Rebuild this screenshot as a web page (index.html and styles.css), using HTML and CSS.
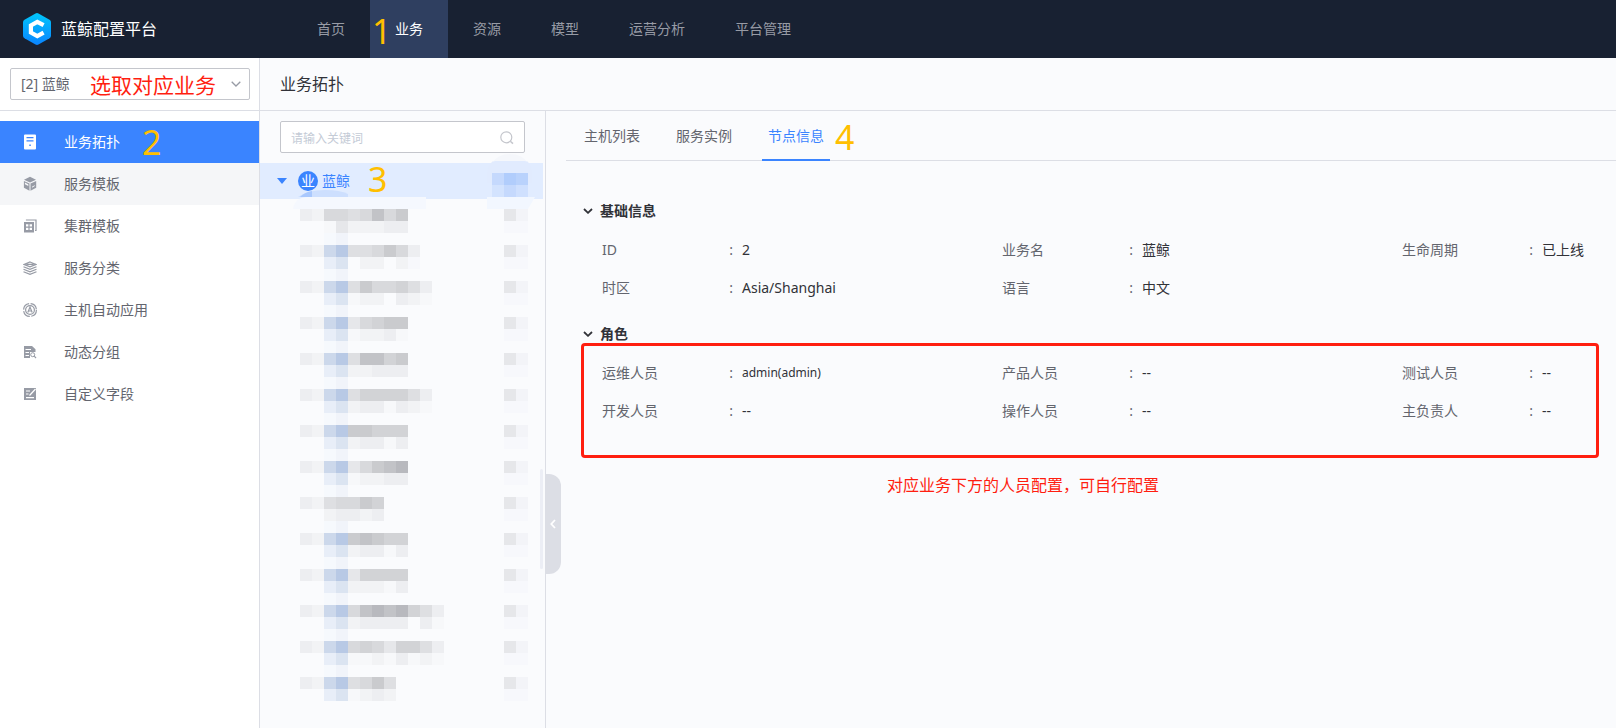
FILE: index.html
```html
<!DOCTYPE html>
<html lang="zh-CN">
<head>
<meta charset="utf-8">
<title>蓝鲸配置平台</title>
<link rel="stylesheet" href="styles.css">
</head>
<body>
<header class="topbar">
  <a class="brand" href="#">
    <svg class="brand-logo" viewBox="0 0 28 32" aria-hidden="true">
      <defs><linearGradient id="logo-fill" x1="0" y1="0" x2="0" y2="1"><stop offset="0" stop-color="#00c6fb"/><stop offset="1" stop-color="#0a84ff"/></linearGradient></defs>
      <path d="M12.500.500Q14-.300 15.500.500L26.500 6.700Q28 7.600 28 9.200V22.800Q28 24.400 26.500 25.300L15.500 31.500Q14 32.300 12.500 31.500L1.500 25.300Q0 24.400 0 22.800V9.200Q0 7.600 1.500 6.700Z" fill="url(#logo-fill)"/>
      <path d="M20.600 12.200L14.300 8.900L7.900 12.500V19.500L14.300 23.100L20.600 19.600" fill="none" stroke="#fff" stroke-width="4.200"/>
    </svg>
    <span>蓝鲸配置平台</span>
  </a>
  <nav class="nav">
    <a class="nav-item" href="#">首页</a>
    <a class="nav-item is-active" href="#">业务<span class="mark mark-one">1</span></a>
    <a class="nav-item" href="#">资源</a>
    <a class="nav-item" href="#">模型</a>
    <a class="nav-item" href="#">运营分析</a>
    <a class="nav-item" href="#">平台管理</a>
  </nav>
</header>
<div class="shell">
  <aside class="sidebar">
    <div class="biz">
      <select class="biz-select" aria-label="业务"><option>[2] 蓝鲸</option></select>
      <svg class="biz-arrow" viewBox="0 0 10 6" aria-hidden="true"><path d="M.7.7L5 5L9.300.700" fill="none" stroke="#979ba5" stroke-width="1.300"/></svg>
      <span class="mark mark-biz">选取对应业务</span>
    </div>
    <nav class="menu">
      <a class="menu-item is-active" href="#">
        <svg class="menu-icon" viewBox="0 0 14 16"><path fill-rule="evenodd" d="M2 .500H12Q13 .500 13 1.500V14.500Q13 15.500 12 15.500H2Q1 15.500 1 14.500V1.500Q1 .500 2 .500ZM3.500 3V4.200H10.500V3ZM3.500 6.200V7.400H10.500V6.200ZM6.300 10.500V12H7.800V10.500Z" fill="#fff"/></svg>
        业务拓扑<span class="mark mark-two">2</span></a>
      <a class="menu-item is-hover" href="#">
        <svg class="menu-icon" viewBox="0 0 14 16"><path d="M7 .800L13 3.800L7 6.600L1 3.800Z" fill="#979ba5"/><path d="M7.500 7.600L13.200 4.900V11.700L7.500 14.800Z" fill="#979ba5"/><path d="M.900 4.900L6.500 7.600V14.800L.900 11.700ZM1.900 6.600V8.300L5.300 10V8.200Z" fill="#979ba5" fill-rule="evenodd"/><path d="M9 11.200L11.700 9.700" stroke="#f5f6f8"/></svg>
        服务模板</a>
      <a class="menu-item" href="#">
        <svg class="menu-icon" viewBox="0 0 14 16"><path d="M3.500 2.500V2H13V12.500H12" fill="none" stroke="#979ba5" stroke-width="1.200"/><path fill-rule="evenodd" d="M1 4H11V14.500H1ZM3 6.300V8.500H5.400V6.300ZM6.600 6.300V8.500H9V6.300ZM3 9.700V12H5.400V9.700ZM6.600 9.700V12H9V9.700Z" fill="#979ba5"/></svg>
        集群模板</a>
      <a class="menu-item" href="#">
        <svg class="menu-icon" viewBox="0 0 14 16"><g fill="none" stroke="#979ba5" stroke-width="1.200"><path d="M7 2L13 4.400L7 6.800L1 4.400ZM3.500 4.400H10.500"/><path d="M.500 6.800L7 9.300L13.500 6.800M.500 9.300L7 11.800L13.500 9.300M.500 11.800L7 14.300L13.500 11.800"/></g></svg>
        服务分类</a>
      <a class="menu-item" href="#">
        <svg class="menu-icon" viewBox="0 0 14 16"><g fill="none" stroke="#979ba5" stroke-width="1.200"><circle cx="7" cy="8" r="6.400" stroke-dasharray="8.500 1.500"/><circle cx="7" cy="8" r="4.400"/><path d="M4.800 10.500L7 5L9.200 10.500M5.500 9H8.500"/></g></svg>
        主机自动应用</a>
      <a class="menu-item" href="#">
        <svg class="menu-icon" viewBox="0 0 14 16"><path fill-rule="evenodd" d="M1 2H9L12.500 5.200V8H7V14H1ZM2.500 5V6H8V5ZM2.500 8V9H6V8ZM2.500 11V12H6V11Z" fill="#979ba5"/><circle cx="9.700" cy="10.700" r="2" fill="none" stroke="#979ba5"/><path d="M11.200 12.200L13 14" stroke="#979ba5" stroke-width="1.200"/></svg>
        动态分组</a>
      <a class="menu-item" href="#">
        <svg class="menu-icon" viewBox="0 0 14 16"><path d="M1 2H13V14H1Z" fill="#979ba5"/><path d="M3 5H7M3 8H5.500M3 11.700H11M6.500 9.500L12.500 3" stroke="#fff" stroke-width="1.200"/></svg>
        自定义字段</a>
    </nav>
  </aside>
  <main class="page">
    <h1 class="page-title">业务拓扑</h1>
    <div class="columns">
      <section class="tree">
        <div class="search">
          <input class="search-input" type="text" placeholder="请输入关键词" aria-label="请输入关键词">
          <svg class="search-icon" viewBox="0 0 14 14" aria-hidden="true"><circle cx="6.300" cy="6.300" r="5.500" fill="none" stroke="#c4c6cc" stroke-width="1.200"/><path d="M10.300 10.300L13 12.600" stroke="#c4c6cc" stroke-width="1.500"/></svg>
        </div>
        <div class="node">
          <span class="node-caret"></span>
          <span class="node-badge">业</span>
          <span class="node-name">蓝鲸</span>
          <span class="mark mark-three">3</span>
          <svg class="node-mosaic" viewBox="0 0 283 48" aria-hidden="true">
            <path d="M38 34Q48 27 65 27Q80 27 88 31V34Z" fill="#cddffe"/>
            <path d="M40 34Q45 29 52 28V34Z" fill="#a9c8fd"/>
            <path d="M33 46Q35 34 48 34H166V46Z" fill="#f5f8fe"/>
            <path d="M232 0Q238-9 250-9Q262-9 268 0V-2H232Z" fill="#f5f7fb"/>
            <path d="M227 10Q229-2 235-2H265Q271-2 272 10V20H227Z" fill="#e1ebfe"/>
            <path d="M227 34H275L268 46H227Z" fill="#f2f7ff"/>
            <path d="M232 10H244V22H232Z" fill="#c5d9fd"/><path d="M244 10H256V22H244Z" fill="#b1cdfc"/><path d="M256 10H268V22H256Z" fill="#b9d2fc"/>
            <path d="M232 22H244V34H232Z" fill="#d3e3fe"/><path d="M244 22H256V34H244Z" fill="#c5d9fd"/><path d="M256 22H268V34H256Z" fill="#cfe0fe"/>
          </svg>
        </div>
        <ul class="nodes" id="nodes"></ul>
        <span class="tree-scroll"></span>
        <button class="collapse" type="button" aria-label="收起"><svg class="collapse-icon" viewBox="0 0 6 10"><path d="M5 1L1.300 5L5 9" fill="none" stroke="#fff" stroke-width="1.800"/></svg></button>
      </section>
      <section class="detail">
        <div class="tabs">
          <button class="tab" type="button">主机列表</button>
          <button class="tab" type="button">服务实例</button>
          <button class="tab is-active" type="button">节点信息</button>
          <span class="mark mark-four">4</span>
        </div>
        <div class="info">
          <section class="group">
            <h2 class="group-title"><svg class="group-arrow" viewBox="0 0 10 6"><path d="M1 1L5 4.800L9 1" fill="none" stroke="#313238" stroke-width="1.800"/></svg>基础信息</h2>
            <dl class="fields">
              <div class="field"><dt>ID</dt><dd>2</dd></div>
              <div class="field"><dt>业务名</dt><dd>蓝鲸</dd></div>
              <div class="field"><dt>生命周期</dt><dd>已上线</dd></div>
              <div class="field"><dt>时区</dt><dd>Asia/Shanghai</dd></div>
              <div class="field"><dt>语言</dt><dd>中文</dd></div>
            </dl>
          </section>
          <section class="group">
            <h2 class="group-title"><svg class="group-arrow" viewBox="0 0 10 6"><path d="M1 1L5 4.800L9 1" fill="none" stroke="#313238" stroke-width="1.800"/></svg>角色</h2>
            <dl class="fields">
              <div class="field"><dt>运维人员</dt><dd class="user">admin(admin)</dd></div>
              <div class="field"><dt>产品人员</dt><dd>--</dd></div>
              <div class="field"><dt>测试人员</dt><dd>--</dd></div>
              <div class="field"><dt>开发人员</dt><dd>--</dd></div>
              <div class="field"><dt>操作人员</dt><dd>--</dd></div>
              <div class="field"><dt>主负责人</dt><dd>--</dd></div>
            </dl>
            <span class="frame"></span>
          </section>
          <p class="note">对应业务下方的人员配置，可自行配置</p>
        </div>
      </section>
    </div>
  </main>
</div>
<script src="nodes.js"></script>
</body>
</html>
```
FILE: nodes.js
```js
// Masked node names: each character is one 12px cell, "." is empty.
const shades = {
  1: '#f7f8fa', 2: '#f2f3f5', 3: '#edeef1', 4: '#e6e7ea', 5: '#dedfe2', 6: '#d8d9dc',
  7: '#d2d3d6', 8: '#cacbce', 9: '#c2c3c7', A: '#b8b9be', B: '#ccd8eb', C: '#b8c9e5',
  D: '#e8eef8', E: '#dbe4f1', F: '#f6f9fd', G: '#f1f4fa', H: '#f3f4f8', I: '#f7f8fc'
};
const rows = [
  ['326656968', '..1422233', '..FG'],
  ['32BC556863', '..DE.22.2I', '..FG'],
  ['32BC5866753', '..DE122.321', '..FG'],
  ['32BC46788', '..DE12231', '..FG'],
  ['32BC59978', '..DE22333', '..FG'],
  ['32BC5777753', '..DE2331321', '..FG'],
  ['32BC88777', '..DE23313', '..FG'],
  ['32BC4689A', '..DE12233', '..FG'],
  ['3256687', '..23323', '..FG'],
  ['32BC89877', '..DE23313', '..FG'],
  ['32BC47777', '..DE22213', '..FG'],
  ['32BC69A9A753', '..DE23333.31', '..FG'],
  ['32BC67647753', '..DE11213121', '..FG'],
  ['32BC5685', '..DE1232', '']
];
const cells = (text, x, y) => [...text].map((c, i) =>
  shades[c] ? `<rect x="${x + i * 12}" y="${y}" width="12" height="12" fill="${shades[c]}"/>` : '').join('');
document.getElementById('nodes').innerHTML = rows.map(([top, mid, low]) =>
  `<li class="nodes-row"><svg class="nodes-mosaic" viewBox="0 0 228 36" shape-rendering="crispEdges">${
    cells(top, 0, 0) + cells(mid, 0, 12) + cells(low, 0, 24) +
    cells('4H', 204, 0) + cells('II', 204, 12)}</svg></li>`).join('');
```
FILE: styles.css
```css
* { box-sizing: border-box; }

body {
  margin: 0;
  min-height: 100vh;
  display: flex;
  flex-direction: column;
  font: 14px/20px "Noto Sans", "Noto Sans CJK SC", sans-serif;
  color: #63656e;
  background: #fafbfd;
}

a { color: inherit; text-decoration: none; }
button, input, select { font: inherit; color: inherit; }
h1, h2, dl, dd, ul, p { margin: 0; padding: 0; }

.topbar { display: flex; height: 58px; background: #182132; }
.brand { display: flex; align-items: center; gap: 10px; width: 292px; padding-left: 23px; font-size: 16px; color: #fff; }
.brand-logo { width: 28px; height: 32px; }
.nav { display: flex; }
.nav-item { position: relative; padding: 0 25px; line-height: 58px; color: #979ba5; white-space: nowrap; }
.nav-item.is-active { color: #fff; background: #2f3f60; }

.mark { position: absolute; font-size: 34px; line-height: 40px; color: #ffbf00; white-space: nowrap; }
.mark-one { left: 2px; top: 11px; }
.mark-two { left: 142px; top: 1px; }
.mark-three { left: 108px; top: -4px; }
.mark-four { left: 269px; top: 6px; }
.mark-biz { left: 90px; top: 7px; font-size: 21px; color: #ff1e10; pointer-events: none; }

.shell { flex: 1; display: flex; }
.sidebar { width: 260px; flex: none; background: #fff; border-right: 1px solid #dcdee5; }
.biz { position: relative; padding: 10px 9px 10px 10px; border-bottom: 1px solid #dcdee5; }
.biz-select { display: block; width: 100%; height: 32px; padding: 0 30px 0 10px; border: 1px solid #c4c6cc; border-radius: 2px; background: #fff; appearance: none; }
.biz-arrow { position: absolute; right: 18px; top: 23px; width: 10px; height: 6px; }
.menu { padding-top: 10px; }
.menu-item { position: relative; display: flex; align-items: center; gap: 27px; height: 42px; padding-left: 23px; }
.menu-item.is-active { color: #fff; background: #3a84ff; }
.menu-item.is-hover { background: #f5f6f8; }
.menu-icon { width: 14px; height: 16px; }

.page { flex: 1; min-width: 0; display: flex; flex-direction: column; }
.page-title { padding: 0 20px; border-bottom: 1px solid #dcdee5; font-size: 16px; font-weight: 400; line-height: 52px; color: #313238; }
.columns { flex: 1; display: flex; }

.tree { position: relative; width: 286px; flex: none; border-right: 1px solid #dcdee5; }
.search { position: relative; padding: 10px 20px; }
.search-input { display: block; width: 100%; height: 32px; padding: 2px 32px 0 10px; border: 1px solid #c4c6cc; border-radius: 2px; background: #fff; font-size: 12px; }
.search-input::placeholder { color: #c4cbd6; }
.search-icon { position: absolute; right: 31px; top: 20px; width: 14px; height: 14px; }
.node { position: relative; display: flex; align-items: center; height: 36px; margin-right: 2px; padding-left: 17px; background: #e1ecff; color: #3a84ff; }
.node-caret { border: 5px solid transparent; border-top: 6px solid #3a84ff; border-bottom: 0; }
.node-badge { width: 20px; height: 20px; margin: 0 4px 0 11px; border-radius: 50%; background: #3a84ff; color: #fff; font-size: 14px; text-align: center; }
.node-mosaic { position: absolute; left: 0; top: 0; width: 283px; height: 48px; overflow: visible; }
.nodes { padding: 10px 0 0 40px; list-style: none; }
.nodes-row { height: 36px; }
.nodes-mosaic { display: block; width: 228px; height: 36px; }
.tree-scroll { position: absolute; right: 2px; top: 358px; width: 3px; height: 100px; border-radius: 3px; background: #eceef5; }
.collapse { position: absolute; left: 285px; top: 363px; display: flex; align-items: center; justify-content: center; width: 16px; height: 100px; padding: 0; border: 0; border-radius: 0 12px 12px 0; background: #dcdee5; }
.collapse-icon { width: 6px; height: 10px; }

.detail { flex: 1; min-width: 0; padding-left: 20px; }
.tabs { position: relative; display: flex; height: 50px; border-bottom: 1px solid #dcdee5; }
.tab { position: relative; height: 50px; padding: 0 18px; border: 0; background: none; white-space: nowrap; }
.tab.is-active { color: #3a84ff; }
.tab.is-active::after { content: ""; position: absolute; left: 12px; right: 12px; bottom: 0; height: 2px; background: #3a84ff; }

.info { padding: 40px 0 0 17px; }
.group { position: relative; }
.group + .group { margin-top: 26px; }
.group-title { display: flex; align-items: center; gap: 7px; font-size: 14px; line-height: 20px; color: #313238; }
.group-arrow { width: 10px; height: 6px; }
.fields { display: grid; grid-template-columns: minmax(220px, 400px) minmax(220px, 400px) minmax(190px, 1fr); row-gap: 18px; padding: 19px 0 0 19px; }
.field { display: flex; }
.field dt { display: flex; justify-content: space-between; width: 131px; margin-right: 9px; }
.field dt::after { content: ":"; }
.field dd { color: #313238; white-space: nowrap; }
.field .user { font-size: 12px; }
.frame { position: absolute; left: -2px; right: 17px; top: 19px; height: 115px; border: 3px solid #ff1e10; border-radius: 4px; pointer-events: none; }
.note { padding: 54px 0 0 304px; font-size: 16px; line-height: 20px; color: #ff1e10; }
```
